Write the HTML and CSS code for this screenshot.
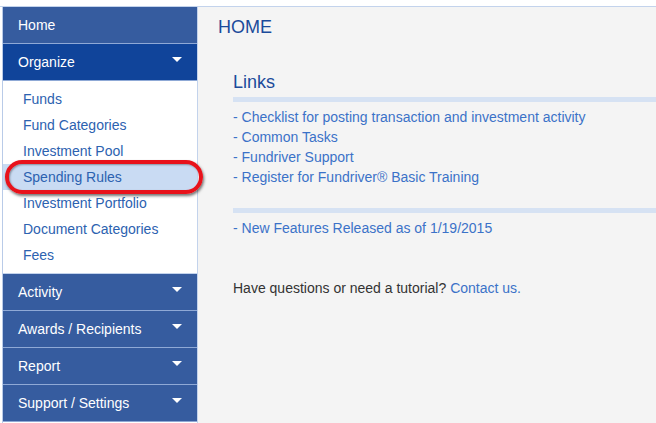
FILE: index.html
```html
<!DOCTYPE html>
<html lang="en">
<head>
    <meta charset="UTF-8">
    <title>Fundriver - Home</title>
    <link rel="stylesheet" href="styles.css">
</head>
<body>

    <div class="page">
        <nav class="sidebar">
            <a class="nav-item" href="#">Home</a>
            <a class="nav-item nav-open" href="#">Organize <span class="caret"></span></a>
            <ul class="submenu">
                <li><a href="#">Funds</a></li>
                <li><a href="#">Fund Categories</a></li>
                <li><a href="#">Investment Pool</a></li>
                <li class="selected"><a href="#">Spending Rules</a></li>
                <li><a href="#">Investment Portfolio</a></li>
                <li><a href="#">Document Categories</a></li>
                <li><a href="#">Fees</a></li>
            </ul>
            <a class="nav-item" href="#">Activity <span class="caret"></span></a>
            <a class="nav-item" href="#">Awards / Recipients <span class="caret"></span></a>
            <a class="nav-item" href="#">Report <span class="caret"></span></a>
            <a class="nav-item" href="#">Support / Settings <span class="caret"></span></a>

            <!-- annotation ring -->
            <div class="callout"></div>
        </nav>

        <main class="main">
            <h1>HOME</h1>

            <div class="panel">
                <h2>Links</h2>
                <div class="rule"></div>
                <ul class="links">
                    <li>- <a href="#">Checklist for posting transaction and investment activity</a></li>
                    <li>- <a href="#">Common Tasks</a></li>
                    <li>- <a href="#">Fundriver Support</a></li>
                    <li>- <a href="#">Register for Fundriver® Basic Training</a></li>
                </ul>
                <div class="rule rule-second"></div>
                <ul class="links">
                    <li>- <a href="#">New Features Released as of 1/19/2015</a></li>
                </ul>

                <p class="help">Have questions or need a tutorial? <a href="#">Contact us.</a></p>
            </div>
        </main>
    </div>

</body>
</html>
```

FILE: styles.css
```css
body {
    margin: 0;
    padding: 0;
    font-family: 'Liberation Sans', Arial, sans-serif;
    font-size: 14px;
    background: #ffffff;
    overflow: hidden;
}
.page {
    display: flex;
    margin-top: 6px;
    padding-left: 2px;
    border-top: 1px solid #c3d3ec;
    height: 416px;
}

/* sidebar */
.sidebar {
    position: relative;
    width: 194px;
    flex-shrink: 0;
    border-left: 1px solid #b9cbe8;
    border-right: 1px solid #c3d3ec;
    background: #ffffff;
}
.nav-item {
    display: flex;
    align-items: center;
    justify-content: space-between;
    height: 36px;
    padding: 0 15px;
    background: #365c9f;
    color: #ffffff;
    text-decoration: none;
    border-bottom: 1px solid #8fa9d6;
}
.nav-open {
    background: #10449a;
}
.caret {
    width: 0;
    height: 0;
    border-left: 5px solid transparent;
    border-right: 5px solid transparent;
    border-top: 5px solid #ffffff;
    margin-top: -6px;
}
.submenu {
    list-style: none;
    margin: 0;
    padding: 5px 0 5px;
    height: 182px;
    border-bottom: 1px solid #c3d3ec;
}
.submenu li {
    height: 26px;
    line-height: 26px;
    padding-left: 20px;
}
.submenu li a {
    color: #2c62b0;
    text-decoration: none;
}
.submenu li.selected {
    background: #c9dbf3;
}

/* red annotation */
.callout {
    position: absolute;
    left: 2px;
    top: 153px;
    width: 190px;
    height: 26px;
    border: 4px solid #e8121b;
    border-radius: 17px;
    box-shadow: 1px 2px 3px rgba(0, 0, 0, 0.55), inset 1px 1px 2px rgba(0, 0, 0, 0.35);
}

/* main */
.main {
    flex: 1;
    background: #f4f4f4;
    padding: 0 0 0 20px;
    overflow: hidden;
}
h1 {
    margin: 0;
    padding-top: 10px;
    font-size: 18px;
    font-weight: normal;
    color: #1b4b9b;
    line-height: 20px;
}
.panel {
    padding-left: 15px;
    padding-top: 35px;
}
h2 {
    margin: 0;
    font-size: 18px;
    font-weight: normal;
    color: #1b4b9b;
    line-height: 20px;
}
.rule {
    height: 5px;
    background: #d6e2f3;
    margin-top: 5px;
    margin-right: -20px;
}
.rule-second {
    margin-top: 21px;
}
.links {
    list-style: none;
    margin: 0;
    padding: 5px 0 0;
    color: #3b72c8;
}
.links li {
    line-height: 20px;
}
.links a, .help a {
    color: #3b72c8;
    text-decoration: none;
}
.help {
    margin: 40px 0 0;
    color: #333333;
    line-height: 20px;
}
```
